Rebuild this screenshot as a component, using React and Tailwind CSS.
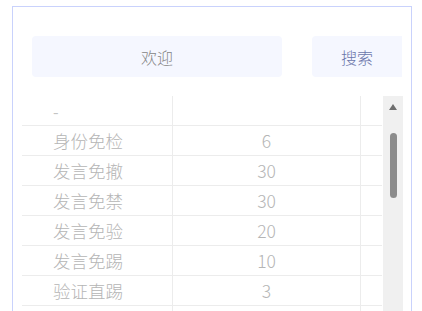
import React from 'react';

const rows = [
    { name: '身份免检', value: '6' },
    { name: '发言免撤', value: '30' },
    { name: '发言免禁', value: '30' },
    { name: '发言免验', value: '20' },
    { name: '发言免踢', value: '10' },
    { name: '验证直踢', value: '3' },
    { name: '', value: '' },
];

const cjk = { fontFamily: '"Noto Sans CJK SC", "Noto Sans", sans-serif' };

const App = () => {
    return (
        <div className="w-[422px] h-[311px] bg-white overflow-hidden pl-[12px] pt-[6px]" style={cjk}>
            <div className="w-[400px] h-[400px] border border-[#c9d2fc] pt-[29px]">
                {/* Buttons */}
                <div className="flex items-center pl-[19px] gap-[30px]">
                    <button className="w-[250px] h-[41px] rounded-[4px] bg-[#f5f7ff] text-[16px] font-light text-[#858585]">
                        欢迎
                    </button>
                    <button className="w-[90px] h-[41px] rounded-l-[4px] bg-[#f5f7ff] text-[16px] font-light text-[#6a76aa]">
                        搜索
                    </button>
                </div>

                {/* Table with scrollbar */}
                <div className="flex mt-[19px] pl-[9px]">
                    <div className="w-[360px]">
                        <div className="flex h-[30px] border-b border-[#ececec]">
                            <div className="w-[151px] border-r border-[#ececec] pl-[31px] pt-[1px] flex items-center text-[16px] text-[#c4c4c4]">-</div>
                            <div className="w-[188px] border-r border-[#ececec]"></div>
                            <div className="flex-1"></div>
                        </div>
                        {rows.map((row, i) => (
                            <div key={i} className="flex h-[30px] border-b border-[#ececec] text-[17.5px] font-light text-[#b5b5b5] leading-none">
                                <div className="w-[151px] border-r border-[#ececec] pl-[31px] flex items-center">{row.name}</div>
                                <div className="w-[188px] border-r border-[#ececec] flex items-center justify-center">{row.value}</div>
                                <div className="flex-1"></div>
                            </div>
                        ))}
                    </div>
                    <div className="w-[20px] h-[300px] bg-[#f0f0f0] ml-[1px] flex flex-col items-center pt-[8px]">
                        <svg width="8" height="6" viewBox="0 0 8 6">
                            <path d="M4 0 L8 6 L0 6 Z" fill="#6e6e6e" />
                        </svg>
                        <div className="w-[7px] h-[65px] rounded-full bg-[#8c8c8c] mt-[23px]"></div>
                    </div>
                </div>
            </div>
        </div>
    );
};

export default App;
